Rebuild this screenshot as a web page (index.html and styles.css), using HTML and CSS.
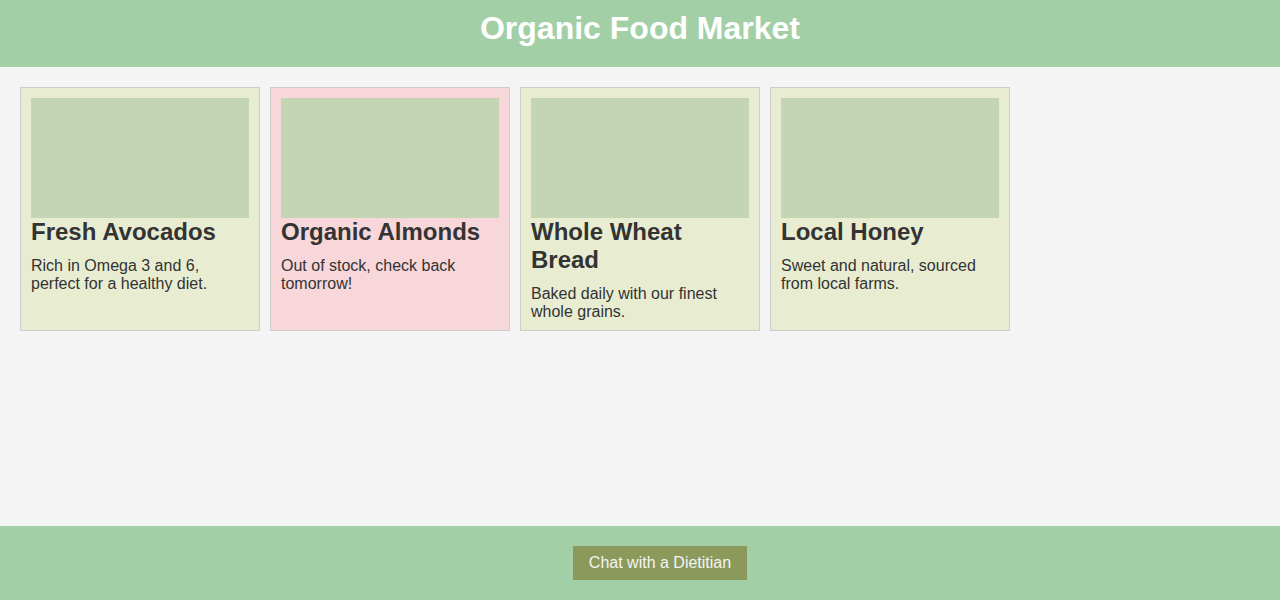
FILE: index.html
```html
<!DOCTYPE html>
<html>
<head>
<meta charset="utf-8">
<link rel="stylesheet" href="styles.css">
</head>
<body>
<header class="header"><h1 class="title">Organic Food Market</h1></header>
<main class="main">
  <div class="card">
    <div class="pic"></div>
    <h2 class="name">Fresh Avocados</h2>
    <p class="desc">Rich in Omega 3 and 6, perfect for a healthy diet.</p>
  </div>
  <div class="card card-out">
    <div class="pic"></div>
    <h2 class="name">Organic Almonds</h2>
    <p class="desc">Out of stock, check back tomorrow!</p>
  </div>
  <div class="card">
    <div class="pic"></div>
    <h2 class="name">Whole Wheat Bread</h2>
    <p class="desc">Baked daily with our finest whole grains.</p>
  </div>
  <div class="card">
    <div class="pic"></div>
    <h2 class="name">Local Honey</h2>
    <p class="desc">Sweet and natural, sourced from local farms.</p>
  </div>
</main>
<footer class="footer"><button class="chat">Chat with a Dietitian</button></footer>
</body>
</html>
```
FILE: styles.css
```css
* { box-sizing: border-box; }
html, body { margin: 0; padding: 0; }
body {
  font-family: "Liberation Sans", Arial, sans-serif;
  background: #f4f4f4;
  color: #333;
  min-height: 100vh;
  display: flex;
  flex-direction: column;
}
.header {
  background: #a2cfa5;
  height: 67px;
  padding-top: 10px;
  text-align: center;
}
.title {
  margin: 0;
  font-size: 32px;
  line-height: 37px;
  color: #fff;
  font-weight: bold;
}
.main {
  flex: 1;
  display: flex;
  align-items: flex-start;
  gap: 10px;
  padding: 20px;
}
.card {
  width: 240px;
  height: 244px;
  background: #e8edd2;
  border: 1px solid #ccc;
  padding: 10px;
}
.card-out { background: #f7d7da; }
.pic {
  height: 120px;
  background: #c4d5b4;
}
.name {
  margin: 0 0 10px;
  font-size: 24px;
  line-height: 28px;
  font-weight: bold;
}
.desc {
  margin: 0;
  font-size: 16px;
  line-height: 18px;
  padding-top: 1px;
}
.footer {
  background: #a2cfa5;
  height: 74px;
  padding: 20px 0 20px 40px;
  display: flex;
  justify-content: center;
}
.chat {
  font-family: "Liberation Sans", Arial, sans-serif;
  font-size: 16px;
  line-height: 18px;
  height: 34px;
  padding: 8px 16px;
  background: #8b9a5b;
  color: #f4f4f4;
  border: none;
  margin: 0;
}
```
